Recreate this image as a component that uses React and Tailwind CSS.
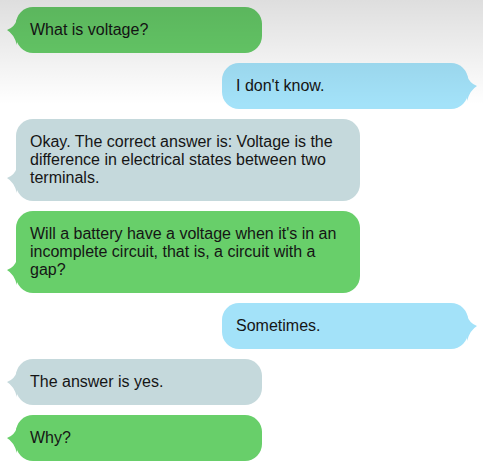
import React from "react";

const COLORS = {
  green: "bg-[#68cf6a]",
  blue: "bg-[#a3e2f9]",
  gray: "bg-[#c5d9dc]",
};
const FILL = { green: "#68cf6a", blue: "#a3e2f9", gray: "#c5d9dc" };

const messages = [
  { side: "left", color: "green", w: "w-[246px]", text: "What is voltage?" },
  { side: "right", color: "blue", w: "w-[246px]", text: "I don't know." },
  {
    side: "left",
    color: "gray",
    w: "w-[344px]",
    text: "Okay. The correct answer is: Voltage is the difference in electrical states between two terminals.",
  },
  {
    side: "left",
    color: "green",
    w: "w-[344px]",
    text: "Will a battery have a voltage when it's in an incomplete circuit, that is, a circuit with a gap?",
  },
  { side: "right", color: "blue", w: "w-[246px]", text: "Sometimes." },
  { side: "left", color: "gray", w: "w-[246px]", text: "The answer is yes." },
  { side: "left", color: "green", w: "w-[246px]", text: "Why?" },
];

function Tail({ side, fill }) {
  if (side === "left") {
    return (
      <svg
        className="absolute left-[-9px] bottom-[8px]"
        width="10"
        height="26"
        viewBox="0 0 10 26"
      >
        <path d="M10 0 Q8 8 0 11 Q7 15 10 26 Z" fill={fill} />
      </svg>
    );
  }
  return (
    <svg
      className="absolute right-[-9px] bottom-[8px]"
      width="10"
      height="26"
      viewBox="0 0 10 26"
    >
      <path d="M0 0 Q2 8 10 11 Q3 15 0 26 Z" fill={fill} />
    </svg>
  );
}

export default function App() {
  return (
    <div
      className="relative min-h-screen w-full bg-white overflow-hidden"
      style={{ fontFamily: '"Liberation Sans", Arial, sans-serif' }}
    >
      <div className="flex flex-col gap-[10px] pt-[7px] pl-[16px] pr-[15px]">
        {messages.map((m, i) => (
          <div
            key={i}
            className={`flex ${m.side === "left" ? "justify-start" : "justify-end"}`}
          >
            <div
              className={`relative ${m.w} ${COLORS[m.color]} rounded-[17px] px-[14px] py-[14px] text-[16px] leading-[18px] text-[#151515]`}
            >
              <Tail side={m.side} fill={FILL[m.color]} />
              <span className="relative">{m.text}</span>
            </div>
          </div>
        ))}
      </div>
      <div className="pointer-events-none absolute left-0 top-0 h-[105px] w-full bg-gradient-to-b from-[rgba(0,0,0,0.13)] to-[rgba(0,0,0,0)]" />
    </div>
  );
}
